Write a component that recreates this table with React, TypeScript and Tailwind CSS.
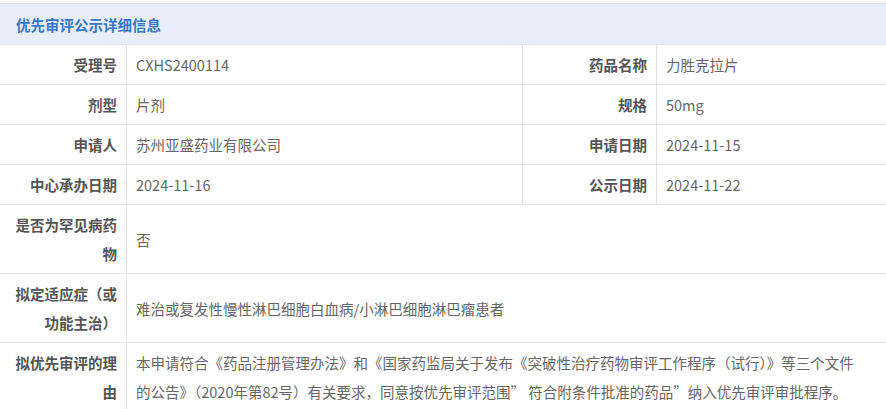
import React from "react";

const label =
  "flex items-center justify-end text-right pl-[10px] pr-[9px] py-[5px] border-r border-b border-[#e3e3e3] font-bold text-[#555555]";
const value =
  "flex items-center pl-[9px] py-[5px] border-b border-[#e3e3e3] text-[#666666]";

export default function App() {
  return (
    <div
      className="min-h-screen bg-white text-[14.5px] leading-[29px]"
      style={{ fontFamily: '"Noto Sans CJK SC", "Noto Sans", sans-serif' }}
    >
      <div className="h-[3px] bg-[#f9f9f9]" />
      {/* Header */}
      <div className="h-[42px] flex items-center pl-[16px] border-t border-b border-[#e3e3e3] bg-[#e8eef9] text-[#3776cc] font-bold">
        优先审评公示详细信息
      </div>

      <div className="grid grid-cols-[127px_396px_134px_1fr]">
        <div className={label}>受理号</div>
        <div className={`${value} pr-[10px] border-r`}>CXHS2400114</div>
        <div className={label}>药品名称</div>
        <div className={`${value} pr-[10px]`}>力胜克拉片</div>

        <div className={label}>剂型</div>
        <div className={`${value} pr-[10px] border-r`}>片剂</div>
        <div className={label}>规格</div>
        <div className={`${value} pr-[10px]`}>50mg</div>

        <div className={label}>申请人</div>
        <div className={`${value} pr-[10px] border-r`}>苏州亚盛药业有限公司</div>
        <div className={label}>申请日期</div>
        <div className={`${value} pr-[10px]`}>2024-11-15</div>

        <div className={label}>中心承办日期</div>
        <div className={`${value} pr-[10px] border-r`}>2024-11-16</div>
        <div className={label}>公示日期</div>
        <div className={`${value} pr-[10px]`}>2024-11-22</div>

        <div className={label}>是否为罕见病药物</div>
        <div className={`${value} pr-[10px] col-span-3`}>否</div>

        <div className={label}>拟定适应症（或功能主治）</div>
        <div className={`${value} pr-[10px] col-span-3`}>
          难治或复发性慢性淋巴细胞白血病/小淋巴细胞淋巴瘤患者
        </div>

        <div className={label}>拟优先审评的理由</div>
        <div className={`${value} pr-[22px] col-span-3`}>
          本申请符合《药品注册管理办法》和《国家药监局关于发布《突破性治疗药物审评工作程序（试行）》等三个文件的公告》（2020年第82号）有关要求，同意按优先审评范围” 符合附条件批准的药品”纳入优先审评审批程序。
        </div>
      </div>
    </div>
  );
}
